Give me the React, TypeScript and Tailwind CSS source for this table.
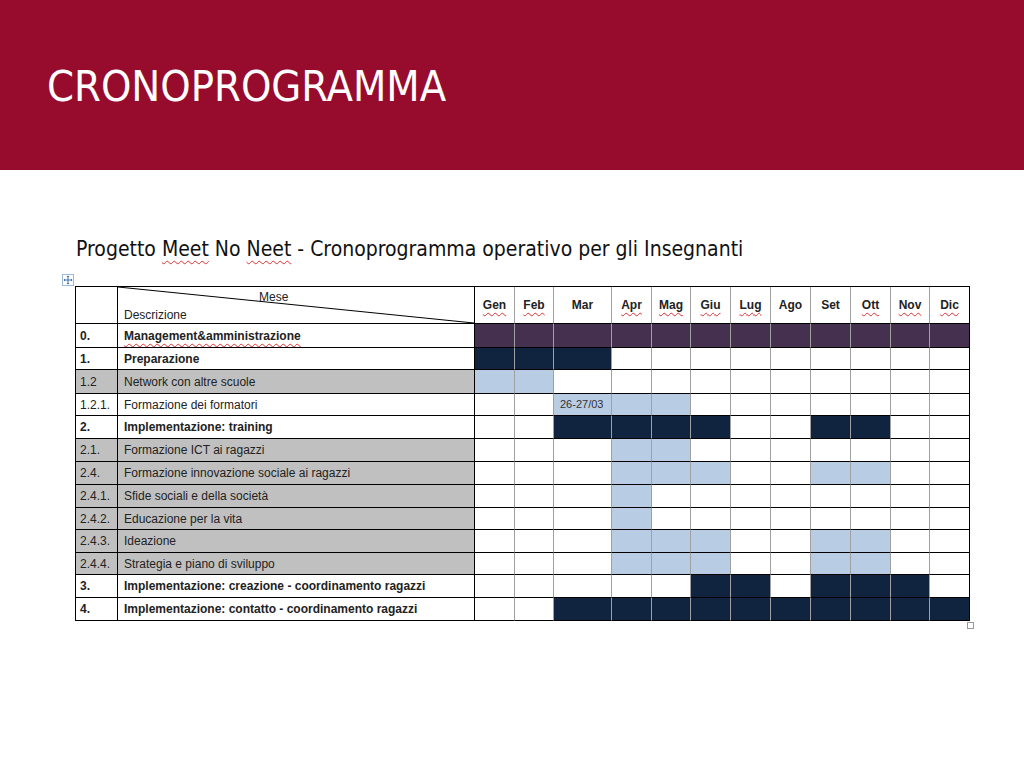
import React from "react";

const months = ["Gen", "Feb", "Mar", "Apr", "Mag", "Giu", "Lug", "Ago", "Set", "Ott", "Nov", "Dic"];
// months flagged by the spell checker in the original document
const flagged = ["Gen", "Feb", "Apr", "Mag", "Giu", "Lug", "Ott", "Nov", "Dic"];

const monthCols = ["w-[40px]", "w-[39px]", "w-[58px]", "w-[40px]", "w-[39px]", "w-[40px]", "w-[40px]", "w-[40px]", "w-[40px]", "w-[40px]", "w-[39px]", "w-[40px]"];

type Fill = "" | "p" | "d" | "l";

interface Row {
  num: string;
  label: string;
  bold?: boolean;
  grey?: boolean;
  cells: Fill[];
  h: string;
  note?: string;
}

const P = "p", D = "d", L = "l", _ = "";

const rows: Row[] = [
  { num: "0.", label: "Management&amministrazione", bold: true, cells: [P, P, P, P, P, P, P, P, P, P, P, P], h: "h-[24px]" },
  { num: "1.", label: "Preparazione", bold: true, cells: [D, D, D, _, _, _, _, _, _, _, _, _], h: "h-[22px]" },
  { num: "1.2", label: "Network con altre scuole", grey: true, cells: [L, L, _, _, _, _, _, _, _, _, _, _], h: "h-[24px]" },
  { num: "1.2.1.", label: "Formazione dei formatori", cells: [_, _, L, L, L, _, _, _, _, _, _, _], h: "h-[22px]", note: "26-27/03" },
  { num: "2.", label: "Implementazione: training", bold: true, cells: [_, _, D, D, D, D, _, _, D, D, _, _], h: "h-[23px]" },
  { num: "2.1.", label: "Formazione ICT ai ragazzi", grey: true, cells: [_, _, _, L, L, _, _, _, _, _, _, _], h: "h-[23px]" },
  { num: "2.4.", label: "Formazione innovazione sociale ai ragazzi", grey: true, cells: [_, _, _, L, L, L, _, _, L, L, _, _], h: "h-[23px]" },
  { num: "2.4.1.", label: "Sfide sociali e della società", grey: true, cells: [_, _, _, L, _, _, _, _, _, _, _, _], h: "h-[23px]" },
  { num: "2.4.2.", label: "Educazione per la vita", grey: true, cells: [_, _, _, L, _, _, _, _, _, _, _, _], h: "h-[22px]" },
  { num: "2.4.3.", label: "Ideazione", grey: true, cells: [_, _, _, L, L, L, _, _, L, L, _, _], h: "h-[23px]" },
  { num: "2.4.4.", label: "Strategia e piano di sviluppo", grey: true, cells: [_, _, _, L, L, L, _, _, L, L, _, _], h: "h-[22px]" },
  { num: "3.", label: "Implementazione: creazione - coordinamento ragazzi", bold: true, cells: [_, _, _, _, _, D, D, _, D, D, D, _], h: "h-[23px]" },
  { num: "4.", label: "Implementazione: contatto - coordinamento ragazzi", bold: true, cells: [_, _, D, D, D, D, D, D, D, D, D, D], h: "h-[23px]" },
];

const fillClass = (f: Fill) => {
  if (f === "p") return "bg-[#45304f]";
  if (f === "d") return "bg-[#10243f]";
  if (f === "l") return "bg-[#b8cce4]";
  return "bg-white";
};

const MoveIcon = () => (
  <svg width="12" height="12" viewBox="0 0 12 12" className="absolute -left-[13px] -top-[12px]">
    <rect x="0.5" y="0.5" width="11" height="11" fill="#fff" stroke="#9fb8d6" />
    <path d="M6 2v8M2 6h8" stroke="#3b6ea8" strokeWidth="1" />
    <path d="M6 1.5l-1.5 1.5h3zM6 10.5l-1.5-1.5h3zM1.5 6l1.5-1.5v3zM10.5 6l-1.5-1.5v3z" fill="#3b6ea8" />
  </svg>
);

export default function App() {
  return (
    <div className="w-[1024px] h-[768px] bg-white overflow-hidden">
      <header className="h-[170px] bg-[#970b2d] flex items-center pl-[47px] pt-[3px]">
        <h1 className="text-white text-[43px] leading-none font-['DejaVu_Sans_Condensed','DejaVu_Sans',sans-serif]">
          CRONOPROGRAMMA
        </h1>
      </header>

      <div className="pl-[76px] pt-[66px]">
        <p className="text-[21px] leading-[26px] text-[#111] font-['DejaVu_Sans_Condensed','DejaVu_Sans',sans-serif]">
          Progetto{" "}
          <span className="underline decoration-wavy decoration-[#e03030] decoration-1 underline-offset-[4px]">Meet</span>{" "}
          No{" "}
          <span className="underline decoration-wavy decoration-[#e03030] decoration-1 underline-offset-[4px]">Neet</span>{" "}
          - Cronoprogramma operativo per gli Insegnanti
        </p>
      </div>

      <div className="relative ml-[75px] mt-[24px] w-[895px]">
        <MoveIcon />
        <table className="border-separate border-spacing-0 table-fixed w-[895px] border-t border-l border-black font-['Liberation_Sans',Arial,sans-serif] text-[12px] text-[#222]">
          <colgroup>
            <col className="w-[42px]" />
            <col className="w-[357px]" />
            {monthCols.map((c, i) => (
              <col key={i} className={c} />
            ))}
          </colgroup>
          <thead>
            <tr className="h-[37px]">
              <th className="border-r border-b border-black bg-white"></th>
              <th className="relative border-r border-b border-black bg-white p-0 text-left font-normal">
                <svg className="absolute inset-0 w-full h-full" preserveAspectRatio="none" viewBox="0 0 100 100">
                  <line x1="0" y1="0" x2="100" y2="100" stroke="#000" strokeWidth="1" vectorEffect="non-scaling-stroke" />
                </svg>
                <div className="relative flex flex-col h-full">
                  <span className="pl-[141px] pt-[2px] leading-[14px]">Mese</span>
                  <span className="pl-[6px] pt-[4px] leading-[14px]">Descrizione</span>
                </div>
              </th>
              {months.map((m, i) => (
                <th
                  key={m}
                  className={`border-b border-r ${i === 11 ? "border-r-black" : "border-r-[#a0a0a0]"} border-b-black bg-white font-bold text-center p-0`}
                >
                  <span
                    className={
                      flagged.includes(m)
                        ? "underline decoration-wavy decoration-[#e03030] decoration-1 underline-offset-[3px]"
                        : ""
                    }
                  >
                    {m}
                  </span>
                </th>
              ))}
            </tr>
          </thead>
          <tbody>
            {rows.map((r) => (
              <tr key={r.num} className={r.h}>
                <td className={`border-r border-b border-black pl-[4px] p-0 ${r.grey ? "bg-[#c0c0c0]" : "bg-white"} ${r.bold ? "font-bold" : ""}`}>
                  {r.num}
                </td>
                <td className={`border-r border-b border-black pl-[6px] p-0 whitespace-nowrap ${r.grey ? "bg-[#c0c0c0]" : "bg-white"} ${r.bold ? "font-bold" : ""}`}>
                  {r.num === "0." ? (
                    <span className="underline decoration-wavy decoration-[#e03030] decoration-1 underline-offset-[3px]">{r.label}</span>
                  ) : (
                    r.label
                  )}
                </td>
                {r.cells.map((c, i) => (
                  <td
                    key={i}
                    className={`border-b border-r border-b-black ${i === 11 ? "border-r-black" : "border-r-[#a0a0a0]"} ${fillClass(c)} p-0 text-[11px] text-[#333]`}
                  >
                    {i === 2 && r.note ? <span className="pl-[6px]">{r.note}</span> : null}
                  </td>
                ))}
              </tr>
            ))}
          </tbody>
        </table>
        <div className="absolute -right-[4px] -bottom-[8px] w-[7px] h-[7px] border border-[#999] bg-white"></div>
      </div>
    </div>
  );
}
